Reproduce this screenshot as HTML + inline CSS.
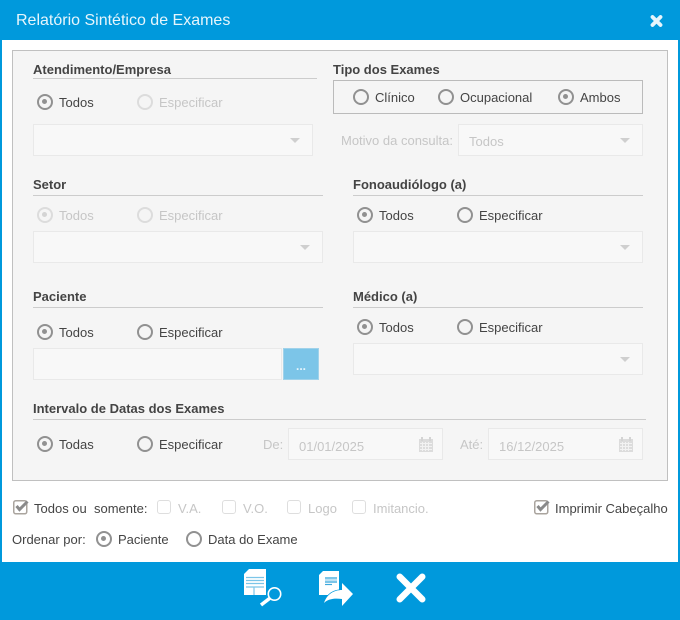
<!DOCTYPE html>
<html><head><meta charset="utf-8"><style>
html,body{margin:0;padding:0}
body{width:680px;height:620px;position:relative;overflow:hidden;background:#fff;font-family:"Liberation Sans",sans-serif;font-size:13px;color:#444}
div,span,svg{position:absolute;box-sizing:border-box}
.t{white-space:nowrap;line-height:16px;margin-top:1px}
.d{color:#c6c6c6}
.h{font-weight:bold;color:#444;white-space:nowrap;line-height:16px;margin-top:1px}
.l{height:1px;background:#ccc}
.r{width:16px;height:16px;border-radius:50%;border:2.5px solid #919191;background:#f5f5f5}
.r.on::after{content:"";position:absolute;left:3px;top:3px;width:5px;height:5px;border-radius:50%;background:#919191}
.r.dis{border-color:#dcdcdc}
.r.dis.on::after{background:#d4d4d4}
.s{background:#f8f8f8;border:1px solid #e9e9e9}
.s::after{content:"";position:absolute;right:12px;top:50%;margin-top:-2px;border-left:5px solid transparent;border-right:5px solid transparent;border-top:5px solid #cfcfcf}
.i{background:#f8f8f8;border:1px solid #e9e9e9}
.c{width:14px;height:14px;border:1.5px solid #dedede;border-radius:3px;background:#fff}
</style></head><body>
<div style="left:0;top:0;width:680px;height:40px;background:#0099dc"></div>
<div style="left:0;top:40px;width:2px;height:522px;background:#0099dc"></div>
<div style="left:678px;top:40px;width:2px;height:522px;background:#0099dc"></div>
<div style="left:0;top:562px;width:680px;height:58px;background:#0099dc"></div>
<div class="t" style="left:16px;top:10px;font-size:16px;line-height:19px;color:#e6f5fc">Relatório Sintético de Exames</div>
<svg style="left:649px;top:14px" width="15" height="14" viewBox="0 0 15 14"><path d="M3.500 3L11.500 11M11.500 3L3.500 11" stroke="#e6f5fc" stroke-width="3.800" stroke-linecap="round"/></svg>

<div style="left:12px;top:50px;width:656px;height:431px;background:#f5f5f5;border:1px solid #c0c0c0"></div>

<div class="h" style="left:33px;top:61px">Atendimento/Empresa</div><div class="l" style="left:33px;top:78px;width:284px"></div>
<div class="r on" style="left:37px;top:94px"></div><div class="t" style="left:59px;top:94px">Todos</div>
<div class="r dis" style="left:137px;top:94px"></div><div class="t d" style="left:159px;top:94px">Especificar</div>
<div class="s" style="left:33px;top:124px;width:280px;height:32px"></div>

<div class="h" style="left:333px;top:61px">Tipo dos Exames</div>
<div style="left:333px;top:80px;width:310px;height:34px;border:1px solid #bbb"></div>
<div class="r" style="left:353px;top:89px"></div><div class="t" style="left:375px;top:89px">Clínico</div>
<div class="r" style="left:438px;top:89px"></div><div class="t" style="left:460px;top:89px">Ocupacional</div>
<div class="r on" style="left:558px;top:89px"></div><div class="t" style="left:580px;top:89px">Ambos</div>
<div class="t d" style="left:341px;top:132px">Motivo da consulta:</div>
<div class="s" style="left:458px;top:124px;width:185px;height:32px"></div>
<div class="t d" style="left:469px;top:133px">Todos</div>

<div class="h" style="left:33px;top:176px">Setor</div><div class="l" style="left:33px;top:195px;width:290px"></div>
<div class="r dis on" style="left:37px;top:207px"></div><div class="t d" style="left:59px;top:207px">Todos</div>
<div class="r dis" style="left:137px;top:207px"></div><div class="t d" style="left:159px;top:207px">Especificar</div>
<div class="s" style="left:33px;top:231px;width:290px;height:32px"></div>

<div class="h" style="left:353px;top:176px">Fonoaudiólogo (a)</div><div class="l" style="left:353px;top:195px;width:290px"></div>
<div class="r on" style="left:357px;top:207px"></div><div class="t" style="left:379px;top:207px">Todos</div>
<div class="r" style="left:457px;top:207px"></div><div class="t" style="left:479px;top:207px">Especificar</div>
<div class="s" style="left:353px;top:231px;width:290px;height:32px"></div>

<div class="h" style="left:33px;top:288px">Paciente</div><div class="l" style="left:33px;top:307px;width:290px"></div>
<div class="r on" style="left:37px;top:324px"></div><div class="t" style="left:59px;top:324px">Todos</div>
<div class="r" style="left:137px;top:324px"></div><div class="t" style="left:159px;top:324px">Especificar</div>
<div class="i" style="left:33px;top:348px;width:249px;height:32px"></div>
<div style="left:283px;top:348px;width:36px;height:32px;background:#7cc5e8;border:1px solid #a0d2ea"></div>
<div class="t" style="left:296px;top:358px;color:#e6f5fc;font-size:12px;line-height:14px;font-weight:bold">...</div>

<div class="h" style="left:353px;top:288px">Médico (a)</div><div class="l" style="left:353px;top:307px;width:290px"></div>
<div class="r on" style="left:357px;top:319px"></div><div class="t" style="left:379px;top:319px">Todos</div>
<div class="r" style="left:457px;top:319px"></div><div class="t" style="left:479px;top:319px">Especificar</div>
<div class="s" style="left:353px;top:343px;width:290px;height:32px"></div>

<div class="h" style="left:33px;top:400px">Intervalo de Datas dos Exames</div><div class="l" style="left:33px;top:419px;width:613px"></div>
<div class="r on" style="left:37px;top:436px"></div><div class="t" style="left:59px;top:436px">Todas</div>
<div class="r" style="left:137px;top:436px"></div><div class="t" style="left:159px;top:436px">Especificar</div>
<div class="t d" style="left:263px;top:436px">De:</div>
<div class="i" style="left:288px;top:428px;width:155px;height:32px"></div>
<div class="t d" style="left:299px;top:438px">01/01/2025</div>
<svg style="left:418px;top:436px" width="16" height="17" viewBox="0 0 16 17"><path d="M1 3h14v13H1z" fill="#dcdcdc"/><path d="M4 1v4M12 1v4" stroke="#d4d4d4" stroke-width="2"/><path d="M2 7.500h12M2 10.500h12M2 13.500h12M4.500 6v9M7.500 6v9M10.500 6v9" stroke="#f2f2f2" stroke-width="1"/></svg>
<div class="t d" style="left:460px;top:436px">Até:</div>
<div class="i" style="left:488px;top:428px;width:155px;height:32px"></div>
<div class="t d" style="left:499px;top:438px">16/12/2025</div>
<svg style="left:618px;top:436px" width="16" height="17" viewBox="0 0 16 17"><path d="M1 3h14v13H1z" fill="#dcdcdc"/><path d="M4 1v4M12 1v4" stroke="#d4d4d4" stroke-width="2"/><path d="M2 7.500h12M2 10.500h12M2 13.500h12M4.500 6v9M7.500 6v9M10.500 6v9" stroke="#f2f2f2" stroke-width="1"/></svg>

<svg style="left:12px;top:498px" width="18" height="17" viewBox="0 0 18 17"><rect x="1.750" y="2.750" width="13" height="13" rx="2" fill="#fff" stroke="#aaa49e" stroke-width="1.500"/><path d="M4.500 8l3 3.500L15.500 3.500" fill="none" stroke="#8a8a8a" stroke-width="3"/></svg>
<div class="t" style="left:34px;top:499.500px">Todos ou&nbsp; somente:</div>
<div class="c" style="left:157px;top:500px"></div><div class="t d" style="left:178px;top:499.500px">V.A.</div>
<div class="c" style="left:222px;top:500px"></div><div class="t d" style="left:243px;top:499.500px">V.O.</div>
<div class="c" style="left:287px;top:500px"></div><div class="t d" style="left:308px;top:499.500px">Logo</div>
<div class="c" style="left:352px;top:500px"></div><div class="t d" style="left:373px;top:499.500px">Imitancio.</div>
<svg style="left:533px;top:498px" width="18" height="17" viewBox="0 0 18 17"><rect x="1.750" y="2.750" width="13" height="13" rx="2" fill="#fff" stroke="#aaa49e" stroke-width="1.500"/><path d="M4.500 8l3 3.500L15.500 3.500" fill="none" stroke="#8a8a8a" stroke-width="3"/></svg>
<div class="t" style="left:555px;top:499.500px">Imprimir Cabeçalho</div>
<div class="t" style="left:12px;top:531px">Ordenar por:</div>
<div class="r on" style="left:96px;top:531px;background:#fff"></div><div class="t" style="left:118px;top:531px">Paciente</div>
<div class="r" style="left:186px;top:531px;background:#fff"></div><div class="t" style="left:208px;top:531px">Data do Exame</div>

<svg style="left:240px;top:566px" width="50" height="42" viewBox="0 0 50 42"><path d="M9 3h17v26H4V8z" fill="#fff"/><path d="M6 11.500h18M6 14.500h18M6 17.500h18M6 21h18" stroke="#7cc5e8" stroke-width="1.200"/><path d="M14 21v8" stroke="#7cc5e8" stroke-width="1.200"/><circle cx="34.500" cy="28" r="6.200" fill="none" stroke="#fff" stroke-width="1.600"/><path d="M29.500 32.500l-8.500 6.500" stroke="#fff" stroke-width="3.600"/></svg>
<svg style="left:315px;top:566px" width="50" height="42" viewBox="0 0 50 42"><path d="M8 5h16v24H4V9z" fill="#fff"/><rect x="10" y="11" width="12" height="6" fill="#7cc5e8"/><path d="M10 14h12" stroke="#fff" stroke-width="1"/><path d="M10 18.500h7" stroke="#3fa9dc" stroke-width="1.200"/><path d="M9 37C12 28 19 24 27 24V17L38 28 27 40V33C19 32 13 33 9 37Z" fill="#fff" stroke="#0099dc" stroke-width="1.500" paint-order="stroke" stroke-linejoin="round"/></svg>
<svg style="left:393.500px;top:570.500px" width="34" height="34" viewBox="0 0 34 34"><path d="M5.750 5.750L28.250 28.250M28.250 5.750L5.750 28.250" stroke="#fff" stroke-width="6.500" stroke-linecap="round"/></svg>
</body></html>
